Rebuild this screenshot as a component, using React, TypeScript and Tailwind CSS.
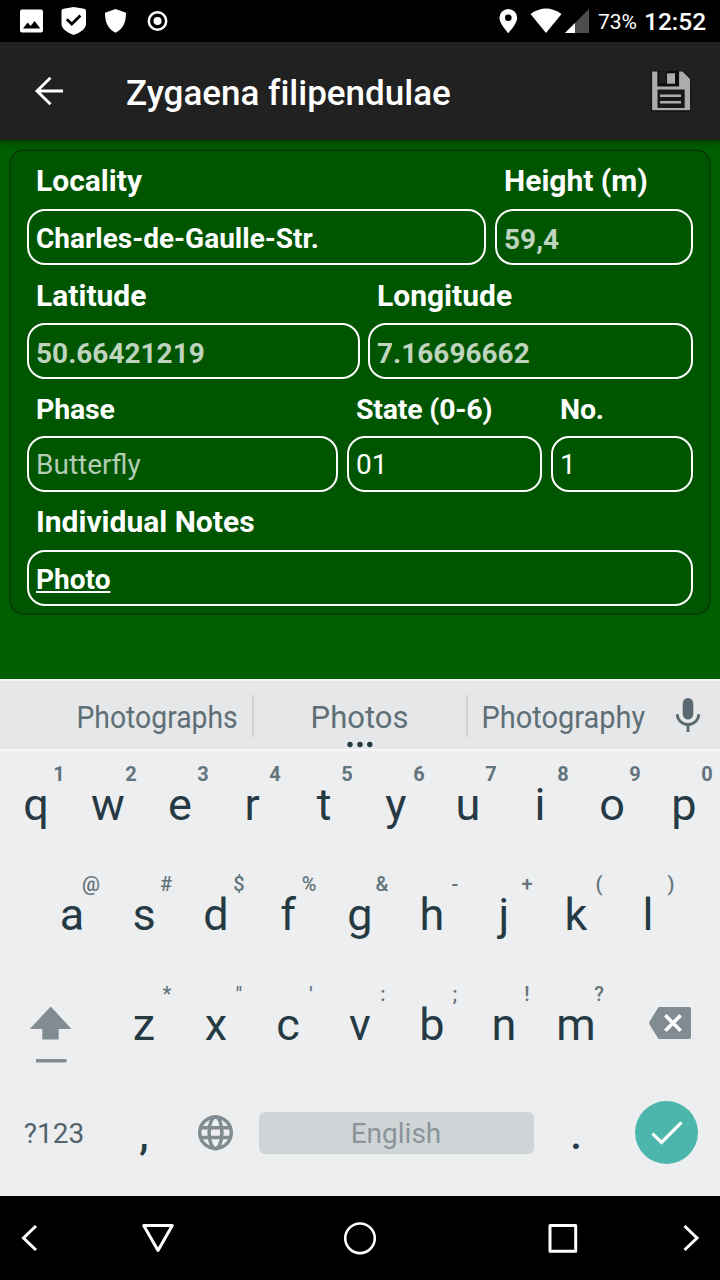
import type { ReactNode } from "react";

/** An icon whose viewBox maps 1:1 to CSS pixels. */
function Icon({ box, className = "", children }: { box: [number, number, number, number]; className?: string; children: ReactNode }) {
  return (
    <svg viewBox={box.join(" ")} width={box[2]} height={box[3]} className={`block shrink-0 ${className}`} fill="none" aria-hidden="true">
      {children}
    </svg>
  );
}

function StatusBar() {
  return (
    <div className="flex h-[42px] items-start bg-black text-white">
      <Icon box={[0, 0, 180, 42]}>
        <path fill="#fff" fillRule="evenodd" d="M22 9.5h19a2 2 0 0 1 2 2v19a2 2 0 0 1-2 2H22a2 2 0 0 1-2-2v-19a2 2 0 0 1 2-2ZM23 28.500h17.300l-5.700-7.600-4 5-2.900-3.300Z" />
        <path fill="#fff" d="M73.700 7 84 8.800q2 .4 2 2.200V24.500q0 5.800-12.300 10.500Q61.500 30.300 61.500 24.500V11q0-1.800 2-2.200Z" />
        <path stroke="#000" strokeWidth="2.800" d="m66.800 19.200 5 4.800 8.600-8.500" />
        <path fill="#fff" d="M115.500 9 126 12.800c0 8.500-2 15.500-10.500 20-8.500-4.500-10.500-11.500-10.500-20Z" />
        <circle cx="157.500" cy="21" r="8.700" stroke="#fff" strokeWidth="2.500" />
        <circle cx="157.500" cy="21" r="4" fill="#fff" />
      </Icon>
      <Icon box={[496, 0, 98, 42]} className="ml-[316px]">
        <path fill="#fff" fillRule="evenodd" d="M508.300 9a8.900 8.900 0 0 1 8.900 8.800c0 6-8.900 15.400-8.900 15.400s-8.900-9.400-8.900-15.400A8.900 8.900 0 0 1 508.300 9Zm0 5.500a3.300 3.300 0 1 0 0 6.600 3.300 3.300 0 0 0 0-6.600Z" />
        <path fill="#fff" d="M530.500 14q15.500-11 31 0L546 33Z" />
        <path fill="#4d4d4d" d="M589 9v24h-24Z" />
        <path fill="#fff" d="M575 23v10h-10Z" />
      </Icon>
      <span className="ml-[4px] w-[46px] text-[21px] leading-[44px]">73%</span>
      <span className="text-[24.500px] leading-[44px] font-medium">12:52</span>
    </div>
  );
}

function AppBar() {
  return (
    <header className="relative flex h-[98px] items-center bg-[#212121] text-white shadow-[0_2px_7px_rgba(0,0,0,0.45)]">
      <Icon box={[34, 75, 30, 32]} className="ml-[34px]">
        <path stroke="#fff" strokeWidth="2.900" d="M63 91H37M50.500 77.800 37 91l13.500 13.200" />
      </Icon>
      <h1 className="ml-[62px] pt-[5px] text-[35px] leading-[40px] font-medium whitespace-nowrap [font-variant-ligatures:none]">Zygaena filipendulae</h1>
      <Icon box={[648, 68, 46, 46]} className="mr-[26px] ml-auto">
        <path fill="#aaacad" stroke="#111" strokeWidth="1.200" d="M652 70.800h6v15h20.500v-15h4.200l8 8v30.500a1.500 1.500 0 0 1-1.500 1.500H653a1.500 1.500 0 0 1-1.500-1.500V71.300Z" />
        <path fill="#0c0c0c" d="M658.200 71h20.500v14.500h-20.500Z" />
        <path fill="#212121" d="M659.200 70h7v13.500h-7Z" />
        <path fill="#aaacad" d="M667 73.300h8v10.400h-8Z" />
        <path fill="#161918" d="M657.500 89.500h27.200v18.500h-27.200Z" />
        <path fill="#aaacad" d="M660 94.600h21v2.500h-21ZM660 101h21v2.600h-21Z" />
      </Icon>
    </header>
  );
}

type FieldProps = { label: string; value: string; width: string; tone?: string; head?: string; inset?: string };

function Field({ label, value, width, tone = "", head = "h-[58px] text-[30px] leading-[59px]", inset = "pt-[3px]" }: FieldProps) {
  return (
    <div className={width}>
      <div className={`pl-[9px] font-bold whitespace-nowrap ${head}`}>{label}</div>
      <div className={`flex h-[56px] items-center rounded-[18px] border-2 border-white pl-[7px] ${inset}`}>
        <span className={`text-[28px] leading-[34px] whitespace-nowrap ${tone}`}>{value}</span>
      </div>
    </div>
  );
}

function RecordForm() {
  const gps = "font-bold text-[#bfd4bf]";
  const gpsHead = "h-[58px] text-[30px] leading-[61px]";
  const phaseHead = "h-[57px] text-[28.500px] leading-[61px] tracking-[-0.2px]";
  return (
    <main className="h-[539px] bg-[#005f00] px-[9px] pt-[9px] text-white">
      <section className="h-[466px] w-[702px] rounded-[15px] border-2 border-[#004000] bg-[#005500] pl-[16px]">
        <div className="flex gap-[9px]">
          <Field label="Locality" value="Charles-de-Gaulle-Str." width="w-[459px]" tone="font-bold" />
          <Field label="Height (m)" value="59,4" width="w-[198px]" tone={gps} inset="pt-[6px]" />
        </div>
        <div className="flex gap-[8px]">
          <Field label="Latitude" value="50.66421219" width="w-[333px]" tone={gps} head={gpsHead} inset="pt-[5px]" />
          <Field label="Longitude" value="7.16696662" width="w-[325px]" tone={gps} head={gpsHead} inset="pt-[5px]" />
        </div>
        <div className="flex gap-[9px]">
          <Field label="Phase" value="Butterfly" width="w-[311px]" tone="text-[#b3ccb3]" head={phaseHead} inset="pt-[2px]" />
          <Field label="State (0-6)" value="01" width="w-[195px]" head={phaseHead} inset="pt-[2px]" />
          <Field label="No." value="1" width="w-[142px]" head={phaseHead} inset="pt-[2px]" />
        </div>
        <Field label="Individual Notes" value="Photo" width="w-[666px]" tone="font-bold underline decoration-2 underline-offset-[2px]" />
      </section>
    </main>
  );
}

function Suggestions() {
  return (
    <div className="relative flex h-[72px] items-start border-t-2 border-b-2 border-t-[#f2f4f3] border-b-[#f8f9fa] bg-[#e5e7e9] pt-[14px] text-[#5f6f76]">
      <div className="flex w-[252px] justify-center pl-[63px]">
        <span className="scale-x-[0.885] text-[32px] leading-[44px]">Photographs</span>
      </div>
      <div className="h-[42px] w-[2px] bg-[#cfd2d4]" />
      <div className="flex w-[212px] justify-center pr-[1px]">
        <span className="text-[31px] leading-[46px]">Photos</span>
      </div>
      <div className="h-[42px] w-[2px] bg-[#cfd2d4]" />
      <div className="flex w-[190px] justify-center">
        <span className="scale-x-[0.905] text-[32px] leading-[44px]">Photography</span>
      </div>
      <Icon box={[674, 696, 28, 38]} className="mt-px ml-[16px]">
        <rect x="682.700" y="698" width="10.600" height="21.500" rx="5.300" fill="#5b6a71" />
        <path stroke="#5b6a71" strokeWidth="2.800" d="M677.300 714.200a10.700 10.300 0 0 0 21.400 0M688 724v8" />
      </Icon>
      <Icon box={[346, 741, 28, 7]} className="absolute top-[60px] left-[346px]">
        <g fill="#263a44">
          <circle cx="350" cy="744.500" r="2.700" />
          <circle cx="360" cy="744.500" r="2.700" />
          <circle cx="369.800" cy="744.500" r="2.700" />
        </g>
      </Icon>
    </div>
  );
}

function Key({ letter, hint, strong = false }: { letter: string; hint: string; strong?: boolean }) {
  const nudge = hint === "@" ? "left-[40px]" : hint === "%" ? "left-[42px]" : "#&".includes(hint) ? "left-[43px]" : "left-[44px]";
  return (
    <div className="relative w-[72px] text-center text-[45px] leading-[111px] text-[#263a44]">
      {letter}
      <span className={`absolute top-[13px] w-[30px] text-center text-[20px] leading-[24px] text-[#64747b] ${nudge} ${strong ? "font-bold" : "font-medium"}`}>{hint}</span>
    </div>
  );
}

function Keys({ letters, hints, strong }: { letters: string; hints: string; strong?: boolean }) {
  return (
    <>
      {letters.split("").map((letter, i) => (
        <Key key={letter} letter={letter} hint={hints[i]} strong={strong} />
      ))}
    </>
  );
}

function Keyboard() {
  return (
    <div className="h-[517px] bg-[#eceef0]">
      <Suggestions />
      <div className="-mt-[2px] flex h-[110px]">
        <Keys letters="qwertyuiop" hints="1234567890" strong />
      </div>
      <div className="flex h-[110px] justify-center">
        <Keys letters="asdfghjkl" hints="@#$%&-+()" />
      </div>
      <div className="flex h-[110px]">
        <Icon box={[0, 969, 108, 110]}>
          <path fill="#808c91" d="M50.700 1006.500 71.500 1029H58.700v10.500H42.300V1029H29.800Z" />
          <path fill="#808c91" d="M36 1059h30.500v3.500H36Z" />
        </Icon>
        <Keys letters="zxcvbnm" hints={"*\"':;!?"} />
        <Icon box={[612, 969, 108, 110]}>
          <path fill="#808c91" d="M659.500 1007H689a2 2 0 0 1 2 2v28a2 2 0 0 1-2 2h-29.500q-1 0-1.600-1l-8.200-13.300q-1-1.700 0-3.400l8.200-13.300q.6-1 1.600-1Z" />
          <path stroke="#fff" strokeWidth="3.600" d="m665.300 1015.300 15.400 15.400M680.700 1015.300l-15.400 15.400" />
        </Icon>
      </div>
      <div className="flex h-[108px] items-center">
        <span className="w-[108px] pt-[2px] text-center text-[28px] leading-[32px] text-[#52636a]">?123</span>
        <span className="w-[72px] pt-[4px] text-center text-[42px] leading-[56px] font-medium text-[#263a44]">,</span>
        <Icon box={[196, 1113, 39, 40]} className="ml-[16px]">
          <g stroke="#808c91" strokeWidth="3.500">
            <circle cx="215.500" cy="1132.700" r="15.800" />
            <ellipse cx="215.500" cy="1132.700" rx="6.400" ry="16" />
            <path d="M200.500 1127.800h30M200.500 1137.600h30" />
          </g>
        </Icon>
        <div className="ml-[24px] flex h-[42px] w-[275px] items-center justify-center rounded-[6px] bg-[#cfd4d7] pt-[1px] pr-[1px] text-[28px] leading-[43px] text-[#8a9499]">English</div>
        <span className="ml-[6px] w-[72px] pt-[4px] text-center text-[42px] leading-[56px] font-medium text-[#263a44]">.</span>
        <div className="mb-[1px] ml-[23px] flex size-[63px] items-center justify-center rounded-full bg-[#4db6ac]">
          <Icon box={[650, 1119, 32, 28]}>
            <path stroke="#fff" strokeWidth="3.200" d="m651.500 1133.700 9 8.700 20-20" />
          </Icon>
        </div>
      </div>
    </div>
  );
}

function NavBar() {
  return (
    <nav className="flex h-[84px] items-center bg-black pl-[18px]">
      <Icon box={[18, 1220, 22, 36]}>
        <path stroke="#fff" strokeWidth="3" d="m36 1226-12.500 12 12.500 12" />
      </Icon>
      <Icon box={[140, 1220, 36, 36]} className="ml-[100px]">
        <path stroke="#fff" strokeWidth="3" strokeLinejoin="round" d="M143.700 1225.500h28.600L158 1250.500Z" />
      </Icon>
      <Icon box={[342, 1220, 36, 36]} className="ml-[166px]">
        <circle cx="360" cy="1238.300" r="14.800" stroke="#fff" strokeWidth="2.600" />
      </Icon>
      <Icon box={[545, 1220, 36, 36]} className="ml-[167px]">
        <rect x="550" y="1225.500" width="25.700" height="25.700" stroke="#fff" strokeWidth="3" strokeLinejoin="round" />
      </Icon>
      <Icon box={[680, 1220, 22, 36]} className="ml-[99px]">
        <path stroke="#fff" strokeWidth="3" d="m684.500 1226 12.500 12-12.500 12" />
      </Icon>
    </nav>
  );
}

export default function App() {
  return (
    <div className="flex h-[1280px] w-[720px] flex-col overflow-hidden bg-black font-['Roboto',sans-serif]">
      <StatusBar />
      <AppBar />
      <RecordForm />
      <Keyboard />
      <NavBar />
    </div>
  );
}
